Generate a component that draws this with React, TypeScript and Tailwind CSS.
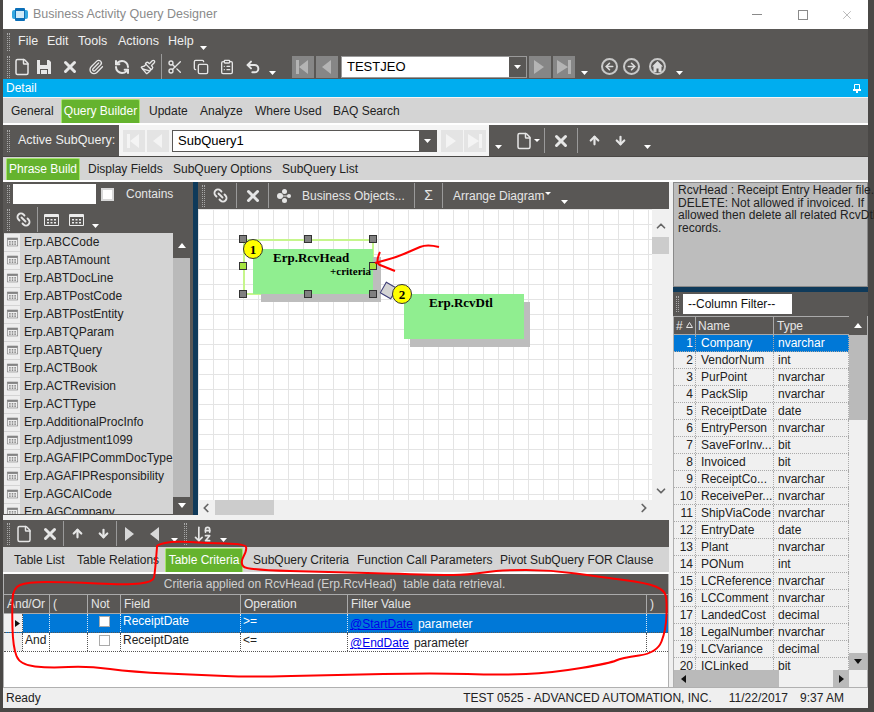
import type { ReactNode } from "react"
import {
  ArrowDown,
  ArrowDownAZ,
  ArrowLeft,
  ArrowRight,
  ArrowUp,
  ChevronDown,
  ChevronLeft,
  ChevronRight,
  ChevronUp,
  ClipboardList,
  Copy,
  File,
  Link2,
  Paintbrush,
  Paperclip,
  RefreshCcw,
  Scissors,
  Undo2,
  X,
} from "lucide-react"

const tables = [
  "ABCCode", "ABTAmount", "ABTDocLine", "ABTPostCode", "ABTPostEntity", "ABTQParam", "ABTQuery", "ACTBook",
  "ACTRevision", "ACTType", "AdditionalProcInfo", "Adjustment1099", "AGAFIPCommDocType", "AGAFIPResponsibility",
  "AGCAICode", "AGCompany",
]

const columns = [
  ["Company", "nvarchar"], ["VendorNum", "int"], ["PurPoint", "nvarchar"], ["PackSlip", "nvarchar"],
  ["ReceiptDate", "date"], ["EntryPerson", "nvarchar"], ["SaveForInv...", "bit"], ["Invoiced", "bit"],
  ["ReceiptCo...", "nvarchar"], ["ReceivePer...", "nvarchar"], ["ShipViaCode", "nvarchar"], ["EntryDate", "date"],
  ["Plant", "nvarchar"], ["PONum", "int"], ["LCReference", "nvarchar"], ["LCComment", "nvarchar"],
  ["LandedCost", "decimal"], ["LegalNumber", "nvarchar"], ["LCVariance", "decimal"], ["ICLinked", "bit"],
]

const arrowNote: [number, number][] = [[439, 247], [427, 244], [413, 250], [397, 257], [375, 263]]
const arrowHead: [number, number][] = [[380, 252], [375, 263], [385, 267], [395, 271]]
const loopNote: [number, number][] = [
  [157, 547], [155, 573], [153, 582], [127, 585], [67, 582], [27, 582], [13, 588], [12, 610], [13, 647], [20, 665],
  [50, 668], [87, 666], [133, 672], [200, 675], [250, 677], [333, 675], [434, 673], [501, 675], [551, 673], [611, 663],
  [621, 658], [657, 653], [666, 630], [667, 600], [664, 590], [647, 583], [601, 577], [551, 570], [501, 570], [467, 575],
  [440, 575], [333, 572], [247, 570], [240, 563], [247, 550], [245, 544], [207, 543], [173, 541], [157, 545], [157, 547],
]

function smooth(points: [number, number][]) {
  let d = `M${points[0][0]} ${points[0][1]}`
  for (let i = 1; i < points.length - 1; i++) {
    const mx = (points[i][0] + points[i + 1][0]) / 2
    const my = (points[i][1] + points[i + 1][1]) / 2
    d += ` Q${points[i][0]} ${points[i][1]} ${mx} ${my}`
  }
  const last = points[points.length - 1]
  return `${d} L${last[0]} ${last[1]}`
}

function Grip({ className = "h-[22px]" }: { className?: string }) {
  return <div className={`w-[3px] border-x border-dotted border-[#a8a8a8] ${className}`} />
}

function Sep() {
  return <div className="h-[25px] w-px bg-[#9a9a9a]" />
}

function Drop({ className = "" }: { className?: string }) {
  return (
    <svg width="7" height="5" viewBox="0 0 7 5" className={`mt-[14px] shrink-0 ${className}`}>
      <path d="M0 0h7L3.5 4z" fill="#fff" />
    </svg>
  )
}

function Slot({ children, className = "w-[26px]" }: { children: ReactNode; className?: string }) {
  return <div className={`flex h-[25px] shrink-0 items-center justify-center text-[#e6e6e6] ${className}`}>{children}</div>
}

function Floppy() {
  return (
    <svg width="16" height="16" viewBox="0 0 16 16">
      <path d="M1 1h12l2 2v12H1z" fill="#e6e6e6" />
      <path d="M4 1h7v5H4zM4 10h8v5H4z" fill="#595755" />
      <path d="M5 11h6v4H5z" fill="#e6e6e6" />
    </svg>
  )
}

function Tri({ dir }: { dir: "l" | "r" }) {
  return (
    <svg width="9" height="14" viewBox="0 0 9 14">
      <path d={dir === "r" ? "M0 0l9 7-9 7z" : "M9 0L0 7l9 7z"} fill="#d8d8d8" />
    </svg>
  )
}

function NavBox({ dir, end, light }: { dir: "l" | "r"; end?: boolean; light?: boolean }) {
  const fill = light ? "#f4f4f4" : "#b4b4b4"
  const path = dir === "l"
    ? end ? "M1 1h3v14H1zM13 1v14L4 8z" : "M12 1v14L3 8z"
    : end ? "M12 1h3v14h-3zM1 1v14l11-7z" : "M2 1v14l10-7z"
  return (
    <div className={`flex h-[22px] w-[22px] shrink-0 items-center justify-center ${light ? "bg-[#e4e4e4]" : "bg-[#868686]"}`}>
      <svg width="16" height="16" viewBox="0 0 16 16"><path d={path} fill={fill} /></svg>
    </div>
  )
}

function Combo({ value, className }: { value: string; className: string }) {
  return (
    <div className={`flex h-[22px] shrink-0 items-stretch border border-[#9a9a9a] bg-white ${className}`}>
      <span className="flex-1 pl-[5px] text-[13px] leading-[20px] text-black">{value}</span>
      <span className="flex w-[17px] items-center justify-center bg-[#595755]">
        <svg width="7" height="4" viewBox="0 0 7 4"><path d="M0 0h7L3.5 4z" fill="#fff" /></svg>
      </span>
    </div>
  )
}

function Circle({ children }: { children: ReactNode }) {
  return (
    <div className="flex h-[17px] w-[17px] items-center justify-center rounded-full border-2 border-[#c8c8c8] text-[#dcdcdc]">
      {children}
    </div>
  )
}

function Tab({ label, active, className }: { label: string; active?: boolean; className: string }) {
  if (active) {
    return (
      <div className={`mt-px flex h-full shrink-0 items-center justify-center rounded-t-[2px] border border-b-0 border-[#a4e56a] bg-[#65b32e] pb-[3px] text-[12px] text-white ${className}`}>
        {label}
      </div>
    )
  }
  return <div className={`flex h-full shrink-0 items-center whitespace-nowrap text-[12px] text-[#222] ${className}`}>{label}</div>
}

function Handle({ className, green }: { className: string; green?: boolean }) {
  return (
    <div className={`absolute h-[8px] w-[8px] border border-[#333] ${green ? "bg-[#a6e540]" : "bg-[#808080]"} ${className}`} />
  )
}

function Badge({ n, className }: { n: number; className: string }) {
  return (
    <div className={`absolute flex h-[20px] w-[20px] items-center justify-center rounded-full border border-[#333] bg-[#ffff00] font-['Liberation_Serif',serif] text-[13px] font-bold leading-none text-black ${className}`}>
      {n}
    </div>
  )
}

function Canvas() {
  return (
    <div className="relative h-[291px] w-[454px] overflow-hidden bg-white bg-[linear-gradient(#e4e4e4_1px,transparent_1px),linear-gradient(90deg,#e4e4e4_1px,transparent_1px)] bg-[size:15px_15px]">
      <div className="absolute left-[45px] top-[30px] h-[56px] w-[131px] border-2 border-[#c6f68c]" />
      <div className="absolute left-[55px] top-[40px] h-[45px] w-[120px] bg-[#90ee90] font-['Liberation_Serif',serif] font-bold text-black shadow-[8px_8px_0_#bdbdbd]">
        <div className="pl-[20px] pt-[1px] text-[13px] leading-[16px]">Erp.RcvHead</div>
        <div className="absolute left-[77px] top-[15px] text-[11px] leading-[14px]">+criteria</div>
      </div>
      <Handle className="left-[41px] top-[26px]" />
      <Handle className="left-[106px] top-[26px]" />
      <Handle className="left-[171px] top-[26px]" />
      <Handle green className="left-[41px] top-[53px]" />
      <Handle green className="left-[171px] top-[53px]" />
      <Handle className="left-[41px] top-[81px]" />
      <Handle className="left-[106px] top-[81px]" />
      <Handle className="left-[171px] top-[81px]" />
      <Badge n={1} className="left-[45px] top-[30px]" />
      <div className="absolute left-[206px] top-[85px] h-[45px] w-[120px] bg-[#90ee90] font-['Liberation_Serif',serif] font-bold text-black shadow-[6px_8px_0_#bdbdbd]">
        <div className="pl-[25px] pt-[1px] text-[13px] leading-[16px]">Erp.RcvDtl</div>
      </div>
      <div className="absolute left-[184px] top-[75px] h-[13px] w-[13px] rotate-[30deg] border border-[#3c3c78] bg-[#d4d4d4]" />
      <Badge n={2} className="left-[194px] top-[75px]" />
    </div>
  )
}

function TableGlyph({ className = "" }: { className?: string }) {
  return (
    <svg width="15" height="12" viewBox="0 0 15 12" className={className}>
      <path d="M.5.5h14v11H.5z" fill="none" stroke="#ececec" />
      <path d="M1 1h13v2H1zM3 5h2v1.500H3zM6.500 5h2v1.500h-2zM10 5h2v1.500h-2zM3 8h2v1.500H3zM6.500 8h2v1.500h-2zM10 8h2v1.500h-2z" fill="#ececec" />
    </svg>
  )
}

function LeftPanel() {
  return (
    <div className="flex h-full w-[190px] shrink-0 flex-col bg-[#595755]">
      <div className="flex h-[24px] shrink-0 items-center pl-[4px]">
        <Grip className="h-[18px]" />
        <div className="ml-[3px] h-[20px] w-[83px] bg-white" />
        <div className="ml-[5px] h-[13px] w-[13px] border-2 border-[#d8d8d8] bg-white" />
        <span className="ml-[12px] text-[12px] text-[#e6e6e6]">Contains</span>
      </div>
      <div className="flex h-[27px] shrink-0 items-center pl-[4px]">
        <Grip />
        <Slot className="w-[27px]"><Link2 size={17} strokeWidth={2.6} className="rotate-45" /></Slot>
        <Sep />
        <Slot className="w-[26px]"><TableGlyph /></Slot>
        <Slot className="w-[24px]"><TableGlyph /></Slot>
        <Drop className="ml-[4px]" />
      </div>
      <div className="flex min-h-0 flex-1 pb-px pl-px">
        <div className="w-[169px] overflow-hidden bg-[#d4d4d4]">
          {tables.map((t) => (
            <div key={t} className="flex h-[18px] items-center">
              <div className="flex h-[17px] w-[16px] items-center justify-center bg-[#eeeeee]"><TableGlyph className="scale-75 opacity-60 invert" /></div>
              <span className="ml-[4px] whitespace-nowrap text-[12px] text-[#222]">Erp.{t}</span>
            </div>
          ))}
        </div>
        <div className="flex w-[17px] flex-col bg-[#bababa]">
          <div className="flex h-[25px] items-center justify-center bg-[#595755]">
            <svg width="8" height="5" viewBox="0 0 8 5"><path d="M0 5h8L4 0z" fill="#fff" /></svg>
          </div>
          <div className="flex-1" />
          <div className="flex h-[17px] items-center justify-center bg-[#595755]">
            <svg width="8" height="5" viewBox="0 0 8 5"><path d="M0 0h8L4 5z" fill="#fff" /></svg>
          </div>
        </div>
      </div>
    </div>
  )
}

function Designer() {
  return (
    <div className="flex h-full w-[471px] shrink-0 flex-col">
      <div className="flex h-[27px] shrink-0 items-center bg-[#595755] pl-[4px] text-[12px] text-[#e6e6e6]">
        <Grip />
        <Slot className="w-[31px]"><Link2 size={17} strokeWidth={2.6} className="rotate-45" /></Slot>
        <Sep />
        <Slot className="w-[31px]"><X size={18} strokeWidth={4} /></Slot>
        <Sep />
        <Slot className="w-[29px]">
          <svg width="15" height="14" viewBox="0 0 15 14" fill="#e6e6e6">
            <circle cx="4" cy="7" r="3" /><circle cx="8.500" cy="2.500" r="2.500" /><circle cx="8.500" cy="11.500" r="2.500" /><circle cx="13" cy="7" r="2" />
            <path d="M4 6.500h9v1H4z" />
          </svg>
        </Slot>
        <span className="ml-[4px] w-[112px] whitespace-nowrap">Business Objects...</span>
        <Sep />
        <Slot className="w-[27px]"><span className="text-[14px]">Σ</span></Slot>
        <Sep />
        <span className="ml-[10px] whitespace-nowrap">Arrange Diagram</span>
        <svg width="6" height="3" viewBox="0 0 6 3" className="mb-[4px] ml-px"><path d="M0 0h6L3 3z" fill="#fff" /></svg>
        <Drop className="ml-[10px]" />
      </div>
      <div className="flex min-h-0 flex-1 flex-col bg-[#f0f0f0]">
        <div className="flex">
          <Canvas />
          <div className="flex w-[17px] flex-col items-center">
            <ChevronUp size={14} strokeWidth={3} className="mt-[10px] text-[#666]" />
            <div className="mt-[-6px] h-[17px] w-full translate-y-[10px] bg-[#cccccc]" />
            <div className="flex-1" />
            <ChevronDown size={14} strokeWidth={3} className="mb-[2px] text-[#666]" />
          </div>
        </div>
        <div className="flex h-[15px] w-[454px] items-center text-[#666]">
          <ChevronLeft size={14} strokeWidth={3} className="ml-[1px]" />
          <div className="ml-[2px] h-[15px] w-[59px] bg-[#cccccc]" />
          <div className="flex-1" />
          <ChevronRight size={14} strokeWidth={3} className="mr-[1px]" />
        </div>
      </div>
    </div>
  )
}

function CriteriaRow({ selected, andOr, op, param }: { selected?: boolean; andOr: string; op: string; param: string }) {
  const cell = `h-full shrink-0 border-r border-dotted px-[2px] text-[12px] leading-[15px] ${selected ? "border-[#d8e6f5]" : "border-[#555]"}`
  return (
    <div className={`flex h-[19px] border-b border-dotted border-[#555] ${selected ? "bg-[#0078d7] text-white" : "bg-white text-[#222]"}`}>
      <div className="relative w-[19px] shrink-0 border-r border-dotted border-[#555] bg-[#f0f0f0]">
        {selected && (
          <svg width="5" height="7" viewBox="0 0 5 7" className="absolute left-[11px] top-[6px]"><path d="M0 0l5 3.500L0 7z" fill="#111" /></svg>
        )}
      </div>
      <div className={`${cell} w-[27px]`}>{andOr}</div>
      <div className={`${cell} w-[38px]`} />
      <div className={`${cell} flex w-[33px] justify-center pt-[2px]`}>
        <div className={`h-[11px] w-[11px] border border-[#aaa] ${selected ? "bg-white" : "bg-white"}`} />
      </div>
      <div className={`${cell} w-[120px]`}>ReceiptDate</div>
      <div className={`${cell} w-[107px]`}>{op}</div>
      <div className={`${cell} w-[299px] pt-[3px]`}>
        <span className="text-[#0000ee] underline">{param}</span>
        <span className="ml-[5px]">parameter</span>
      </div>
      <div className="flex-1" />
    </div>
  )
}

function Criteria() {
  return (
    <div className="flex min-h-0 flex-1 flex-col">
      <div className="flex h-[27px] shrink-0 items-center bg-[#595755] pl-[4px]">
        <Grip />
        <Slot className="ml-[1px] w-[26px]"><File size={18} strokeWidth={2} /></Slot>
        <Slot className="w-[26px]"><X size={18} strokeWidth={4} /></Slot>
        <Sep />
        <Slot className="w-[26px]"><ArrowUp size={13} strokeWidth={4} /></Slot>
        <Slot className="w-[26px]"><ArrowDown size={13} strokeWidth={4} /></Slot>
        <Sep />
        <Slot className="w-[25px]"><Tri dir="r" /></Slot>
        <Slot className="w-[25px]"><Tri dir="l" /></Slot>
        <Drop className="ml-[4px]" />
        <Grip className="ml-[6px] h-[22px]" />
        <Slot className="w-[32px]"><ArrowDownAZ size={20} strokeWidth={2} /></Slot>
        <Drop className="ml-[1px]" />
      </div>
      <div className="flex h-[25px] shrink-0 bg-[#d4d4d4] pl-[8px]">
        <Tab label="Table List" className="ml-[3px] w-[63px]" />
        <Tab label="Table Relations" className="w-[88px]" />
        <Tab active label="Table Criteria" className="w-[78px]" />
        <Tab label="SubQuery Criteria" className="ml-[10px] w-[104px]" />
        <Tab label="Function Call Parameters" className="w-[143px]" />
        <Tab label="Pivot SubQuery FOR Clause" className="w-[150px]" />
      </div>
      <div className="h-[2px] shrink-0 bg-white" />
      <div className="flex min-h-0 flex-1 flex-col border-x border-[#b0b0b0] bg-white">
        <div className="flex h-[20px] shrink-0 items-center justify-center bg-[#595755] text-[12px] text-[#d0d0d0]">
          <span className="-ml-[3px] whitespace-pre">Criteria applied on RcvHead (Erp.RcvHead)  table data retrieval.</span>
        </div>
        <div className="flex h-[20px] shrink-0 border-y border-[#aaa] bg-[#595755] text-[12px] leading-[18px] text-[#e6e6e6]">
          <div className="w-[46px] border-r border-[#aaa] pl-[3px]">And/Or</div>
          <div className="w-[38px] border-r border-[#aaa] pl-[3px]">(</div>
          <div className="w-[33px] border-r border-[#aaa] pl-[3px]">Not</div>
          <div className="w-[120px] border-r border-[#aaa] pl-[3px]">Field</div>
          <div className="w-[107px] border-r border-[#aaa] pl-[3px]">Operation</div>
          <div className="w-[299px] border-r border-[#aaa] pl-[3px]">Filter Value</div>
          <div className="pl-[3px]">)</div>
        </div>
        <CriteriaRow selected andOr="" op=">=" param="@StartDate" />
        <CriteriaRow andOr="And" op="<=" param="@EndDate" />
      </div>
    </div>
  )
}

function RightPanel() {
  return (
    <div className="flex h-full w-[195px] shrink-0 flex-col bg-[#f0f0f0]">
      <div className="h-[105px] shrink-0 border border-[#8a8a8a] bg-[#bdbdbd] px-[4px] pt-[1px] text-[12px] leading-[12.700px] text-[#222]">
        <div className="whitespace-nowrap">RcvHead : Receipt Entry Header file.</div>
        <div className="whitespace-nowrap">DELETE: Not allowed if invoiced. If</div>
        <div className="whitespace-nowrap">allowed then delete all related RcvDtl</div>
        <div>records.</div>
      </div>
      <div className="h-[5px] shrink-0 bg-[#0f3a5a]" />
      <div className="flex h-[24px] shrink-0 items-center bg-[#595755] pl-[3px]">
        <Grip className="h-[16px]" />
        <div className="ml-[4px] flex h-[20px] w-[109px] items-center bg-white pl-[5px] text-[12px] text-[#111]">--Column Filter--</div>
      </div>
      <div className="flex min-h-0 flex-1 border-x border-[#b0b0b0]">
        <div className="flex w-[175px] shrink-0 flex-col">
          <div className="flex h-[19px] shrink-0 border-y border-[#aaa] bg-[#595755] text-[12px] leading-[18px] text-[#e6e6e6]">
            <div className="relative w-[22px] shrink-0 border-r border-[#aaa] pl-[2px]">
              #
              <svg width="7" height="6" viewBox="0 0 7 6" className="absolute left-[12px] top-[5px]"><path d="M3.500.5L6.500 5.500H.5z" fill="none" stroke="#e6e6e6" /></svg>
            </div>
            <div className="w-[78px] shrink-0 border-r border-[#aaa] pl-[2px]">Name</div>
            <div className="pl-[3px]">Type</div>
          </div>
          <div className="min-h-0 flex-1 overflow-hidden">
            {columns.map(([name, type], i) => (
              <div key={name} className={`flex h-[17px] border-b border-dotted border-[#aaa] text-[12px] leading-[16px] ${i === 0 ? "bg-[#0078d7] text-white" : "text-[#222]"}`}>
                <div className="w-[22px] shrink-0 border-r border-dotted border-[#aaa] pr-[2px] text-right">{i + 1}</div>
                <div className="w-[78px] shrink-0 whitespace-nowrap border-r border-dotted border-[#aaa] pl-[5px]">{name}</div>
                <div className="w-[75px] shrink-0 border-r border-dotted border-[#aaa] pl-[4px]">{type}</div>
              </div>
            ))}
          </div>
          <div className="flex h-[17px] shrink-0">
            <div className="flex w-[105px] items-center bg-[#bababa] pl-[7px]">
              <svg width="5" height="8" viewBox="0 0 5 8"><path d="M5 0v8L0 4z" fill="#111" /></svg>
            </div>
            <div className="flex-1" />
            <div className="flex w-[16px] items-center justify-center bg-[#bababa]">
              <svg width="5" height="8" viewBox="0 0 5 8"><path d="M0 0v8l5-4z" fill="#111" /></svg>
            </div>
          </div>
        </div>
        <div className="flex flex-1 flex-col">
          <div className="flex h-[19px] shrink-0 items-center justify-center bg-[#595755]">
            <svg width="8" height="5" viewBox="0 0 8 5"><path d="M0 5h8L4 0z" fill="#fff" /></svg>
          </div>
          <div className="h-[85px] shrink-0 bg-[#bababa]" />
          <div className="flex-1" />
          <div className="flex h-[17px] shrink-0 items-center justify-center bg-[#bababa]">
            <svg width="8" height="5" viewBox="0 0 8 5"><path d="M0 0h8L4 5z" fill="#111" /></svg>
          </div>
          <div className="h-[17px] shrink-0" />
        </div>
      </div>
    </div>
  )
}

export default function App() {
  return (
    <div className="relative flex h-[712px] w-[874px] flex-col overflow-hidden bg-[#4a4846] pb-[4px] pl-[3px] pr-[6px] font-['Liberation_Sans',sans-serif]">
      {/* title bar */}
      <div className="flex h-[29px] shrink-0 items-center bg-white pl-[9px] text-[12px] text-[#8a8a8a]">
        <svg width="16" height="13" viewBox="0 0 16 13">
          <rect x="0" y="2" width="16" height="9" rx="2" fill="#35a8e0" />
          <rect x="3" y="0" width="10" height="13" rx="1" fill="#0b6fb8" />
          <rect x="4" y="3" width="8" height="7" fill="#cfeaf8" />
        </svg>
        <span className="ml-[5px] text-[12.500px]">Business Activity Query Designer</span>
        <div className="flex-1" />
        <div className="h-px w-[10px] bg-[#8a8a8a]" />
        <div className="ml-[36px] h-[10px] w-[10px] border border-[#8a8a8a]" />
        <X size={14} strokeWidth={1} className="ml-[32px] mr-[14px] text-[#8a8a8a]" />
      </div>

      {/* menu and main toolbar */}
      <div className="flex h-[25px] shrink-0 items-center bg-[#595755] pl-[4px] text-[12.500px] text-[#efefef]">
        <Grip className="h-[18px]" />
        <span className="ml-[8px] w-[29px]">File</span>
        <span className="w-[31px]">Edit</span>
        <span className="w-[40px]">Tools</span>
        <span className="w-[50px]">Actions</span>
        <span className="w-[32px]">Help</span>
        <Drop />
      </div>
      <div className="flex h-[25px] shrink-0 items-center bg-[#595755] pl-[4px]">
        <Grip />
        <Slot className="ml-[3px]"><File size={18} strokeWidth={2} /></Slot>
        <Slot><Floppy /></Slot>
        <Slot><X size={18} strokeWidth={4} /></Slot>
        <Slot><Paperclip size={16} strokeWidth={2} /></Slot>
        <Slot><RefreshCcw size={16} strokeWidth={3} /></Slot>
        <Slot><Paintbrush size={16} strokeWidth={2} /></Slot>
        <Sep />
        <Slot><Scissors size={16} strokeWidth={2} /></Slot>
        <Slot><Copy size={16} strokeWidth={2} /></Slot>
        <Slot><ClipboardList size={16} strokeWidth={2} /></Slot>
        <Slot><Undo2 size={16} strokeWidth={3} /></Slot>
        <Drop className="ml-[3px]" />
        <Grip className="ml-[6px]" />
        <div className="ml-[7px] flex gap-[2px]">
          <NavBox dir="l" end />
          <NavBox dir="l" />
        </div>
        <Combo value="TESTJEO" className="ml-[3px] w-[186px]" />
        <div className="ml-[2px] flex gap-[2px]">
          <NavBox dir="r" />
          <NavBox dir="r" end />
        </div>
        <Drop className="ml-[6px]" />
        <Grip className="ml-[6px]" />
        <Slot className="ml-[4px]"><Circle><ArrowLeft size={11} strokeWidth={3.500} /></Circle></Slot>
        <Slot><Circle><ArrowRight size={11} strokeWidth={3.500} /></Circle></Slot>
        <Slot>
          <Circle>
            <svg width="11" height="11" viewBox="0 0 11 11"><path d="M5.500 0L11 5.500H9.500V11H6.500V7.500h-2V11H1.500V5.500H0z" fill="#dcdcdc" /></svg>
          </Circle>
        </Slot>
        <Drop className="ml-[6px]" />
      </div>
      <div className="flex h-[18px] shrink-0 items-center justify-between bg-[#00adef] pl-[3px] pr-[7px] text-[12px] text-white">
        <span>Detail</span>
        <svg width="8" height="9" viewBox="0 0 8 9">
          <path d="M1.500.5h5v5h-5zM0 5.500h8v1H0zM3.500 6.500h1V9h-1z" fill="none" stroke="#fff" strokeWidth="1" />
        </svg>
      </div>
      <div className="flex h-[26px] shrink-0 border-t border-[#f4f4f4] bg-[#d4d4d4] pl-[8px]">
        <Tab label="General" className="w-[50px]" />
        <Tab active label="Query Builder" className="w-[79px]" />
        <Tab label="Update" className="ml-[9px] w-[51px]" />
        <Tab label="Analyze" className="w-[55px]" />
        <Tab label="Where Used" className="w-[78px]" />
        <Tab label="BAQ Search" className="w-[80px]" />
      </div>
      <div className="h-[2px] shrink-0 bg-white" />

      {/* active subquery */}
      <div className="flex h-[31px] shrink-0 bg-[#595755]">
        <div className="flex w-[116px] shrink-0 items-center pl-[4px]">
          <Grip className="h-[22px]" />
          <span className="ml-[8px] whitespace-nowrap text-[12.500px] text-[#efefef]">Active SubQuery:</span>
        </div>
        <div className="flex w-[370px] shrink-0 items-center bg-[#f4f4f4] pl-[4px]">
          <div className="flex gap-[2px]">
            <NavBox light dir="l" end />
            <NavBox light dir="l" />
          </div>
          <Combo value="SubQuery1" className="ml-[3px] w-[265px] !border-[#595755]" />
          <div className="ml-[4px] flex gap-[1px]">
            <NavBox light dir="r" />
            <NavBox light dir="r" end />
          </div>
        </div>
        <div className="flex items-center">
          <Drop className="ml-[6px]" />
          <Grip className="ml-[5px]" />
          <Slot className="ml-[4px] w-[20px]"><File size={18} strokeWidth={2} /></Slot>
          <svg width="6" height="3" viewBox="0 0 6 3"><path d="M0 0h6L3 3z" fill="#fff" /></svg>
          <div className="ml-[4px]"><Sep /></div>
          <Slot className="w-[32px]"><X size={18} strokeWidth={4} /></Slot>
          <Sep />
          <Slot className="w-[32px]"><ArrowUp size={13} strokeWidth={4} /></Slot>
          <Slot className="w-[20px]"><ArrowDown size={13} strokeWidth={4} /></Slot>
          <Drop className="ml-[14px]" />
        </div>
      </div>
      <div className="mt-px flex h-[23px] shrink-0 bg-[#d4d4d4] pl-[3px]">
        <Tab active label="Phrase Build" className="w-[74px]" />
        <Tab label="Display Fields" className="ml-[8px] w-[85px]" />
        <Tab label="SubQuery Options" className="w-[109px]" />
        <Tab label="SubQuery List" className="w-[90px]" />
      </div>
      <div className="h-[2px] shrink-0 bg-white" />

      {/* body */}
      <div className="flex h-[505px] shrink-0 bg-white">
        <div className="flex w-[666px] shrink-0 flex-col">
          <div className="flex h-[333px] shrink-0">
            <LeftPanel />
            <div className="w-[5px] shrink-0 bg-[#0f3a5a]" />
            <Designer />
          </div>
          <div className="h-[5px] shrink-0 bg-[#f0f0f0]" />
          <Criteria />
        </div>
        <div className="w-[4px] shrink-0 bg-[#f0f0f0]" />
        <RightPanel />
      </div>

      {/* status bar */}
      <div className="flex h-[21px] shrink-0 items-center border-t border-[#b0b0b0] bg-[#efefef] pl-[3px] text-[12px] text-[#222]">
        <span>Ready</span>
        <div className="flex-1" />
        <span>TEST 0525 - ADVANCED AUTOMATION, INC.</span>
        <span className="ml-[17px]">11/22/2017</span>
        <span className="ml-[12px]">9:37 AM</span>
        <div className="w-[24px]" />
      </div>

      {/* hand drawn marks over the screenshot */}
      <svg width="874" height="712" viewBox="0 0 874 712" fill="none" stroke="#ff0000" strokeWidth="2" className="pointer-events-none absolute left-0 top-0">
        <path d={smooth(arrowNote)} />
        <path d={smooth(arrowHead)} />
        <path d={smooth(loopNote)} />
      </svg>
    </div>
  )
}
